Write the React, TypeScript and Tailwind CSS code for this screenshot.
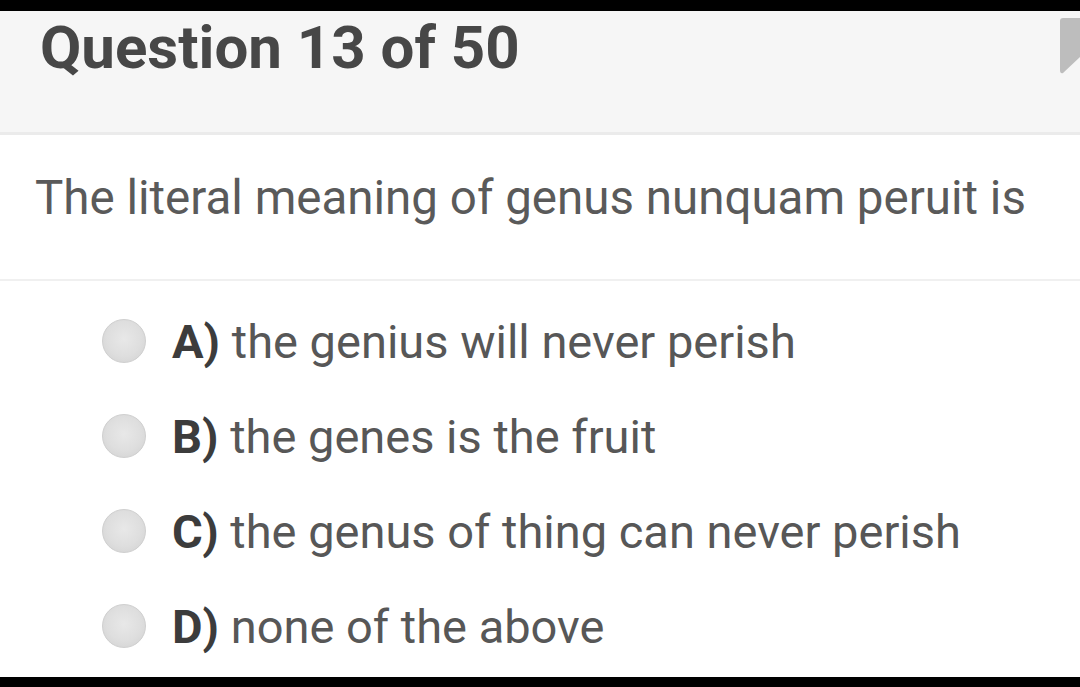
import React from "react";

const options = [
  { key: "A)", text: "the genius will never perish" },
  { key: "B)", text: "the genes is the fruit" },
  { key: "C)", text: "the genus of thing can never perish" },
  { key: "D)", text: "none of the above" },
];

function Radio() {
  return (
    <span className="w-[44px] h-[44px] rounded-full border border-[#cfcfcf] bg-[radial-gradient(circle_at_50%_45%,#e8e8e8_0%,#dedede_55%,#d0d0d0_100%)] shrink-0" />
  );
}

export default function App() {
  return (
    <div
      className="w-[1080px] h-[687px] bg-black flex flex-col overflow-hidden"
      style={{ fontFamily: "Roboto, 'Liberation Sans', sans-serif" }}
    >
      <div className="h-[11px] shrink-0" />

      {/* Header */}
      <div className="h-[124px] shrink-0 bg-[#f6f6f6] border-b-[3px] border-[#ebebeb] flex justify-between">
        <h1 className="pl-[40px] pt-[7px] text-[60px] leading-none font-bold text-[#474747]">
          Question 13 of 50
        </h1>
        <svg width="20" height="56" viewBox="0 0 20 56" className="mt-[7px]">
          <path d="M0 3 Q0 0 3 0 L20 0 L20 39 L3 55 Q0 56 0 52 Z" fill="#bdbdbd" />
        </svg>
      </div>

      {/* Body */}
      <div className="flex-1 bg-white flex flex-col">
        <p className="mt-[40px] pl-[35px] text-[47.5px] leading-none text-[#5a5a5a]">
          The literal meaning of genus nunquam peruit is
        </p>
        <div className="mt-[56px] h-[2px] bg-[#f0f0f0]" />
        <div className="pt-[13px] flex flex-col">
          {options.map((o) => (
            <label key={o.key} className="h-[95px] flex items-center pl-[102px] gap-[26px]">
              <Radio />
              <span className="text-[47px] leading-none text-[#575757]">
                <span className="font-bold text-[#3c3c3c]">{o.key}</span> {o.text}
              </span>
            </label>
          ))}
        </div>
      </div>

      <div className="h-[10px] shrink-0" />
    </div>
  );
}
